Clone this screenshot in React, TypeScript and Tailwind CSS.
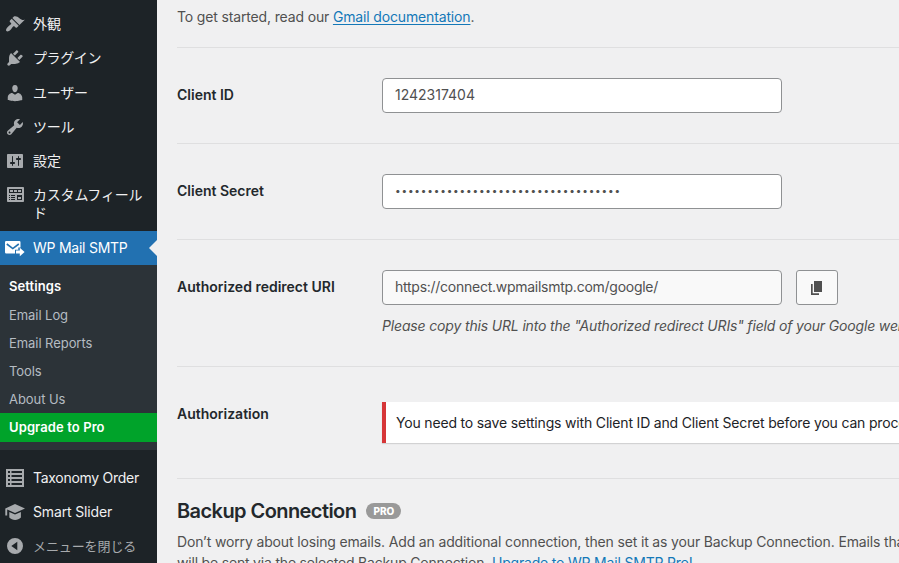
import type { ReactNode } from "react";

function Icon({ d, className = "" }: { d: string; className?: string }) {
  return (
    <svg viewBox="0 0 20 20" className={`size-5 shrink-0 ${className}`} fill="currentColor" fillRule="evenodd">
      <path d={d} />
    </svg>
  );
}

const brush =
  "M14.48 11.06L7.41 3.99l1.5-1.5c.5-.56 2.3-.47 3.51.32 1.21.8 1.43 1.28 2.91 2.1 1.18.64 2.45 1.26 4.45.85zm-.71.71L6.7 4.7 4.93 6.47c-.39.39-.39 1.02 0 1.41l1.06 1.06c.39.39.39 1.03 0 1.42-.6.6-1.43 1.11-2.21 1.69-.35.26-.7.53-1.01.84C1.43 14.23.4 16.08 1.4 17.07c.99 1 2.84-.03 4.18-1.36.31-.31.58-.66.85-1.02.57-.78 1.08-1.61 1.69-2.21.39-.39 1.02-.39 1.41 0l1.06 1.06c.39.39 1.02.39 1.41 0z";
const plug =
  "M13.11 4.36L9.87 7.6 8 5.73l3.24-3.24c.35-.34 1.05-.2 1.56.32.52.51.66 1.21.31 1.55zm-8 1.77l.91-1.12 9.01 9.01-1.19.84c-.71.71-2.63 1.16-3.82 1.16H6.14L4.9 17.26c-.59.59-1.54.59-2.12 0-.59-.58-.59-1.53 0-2.12l1.24-1.24v-3.88c0-1.13.4-3.19 1.09-3.89zm7.26 3.97l3.24-3.24c.34-.35 1.04-.21 1.55.31.52.51.66 1.21.31 1.55l-3.24 3.25z";
const user =
  "M10 9.25c-2.27 0-2.73-3.44-2.73-3.44C7 4.02 7.82 2 9.97 2c2.16 0 2.98 2.02 2.71 3.81 0 0-.41 3.44-2.68 3.44zm0 2.57L12.72 10c2.39 0 4.52 2.33 4.52 4.53v2.49s-3.65 1.13-7.24 1.13c-3.65 0-7.24-1.13-7.24-1.13v-2.49c0-2.25 1.94-4.48 4.47-4.48z";
const wrench =
  "M16.68 9.77c-1.34 1.34-3.3 1.67-4.95.99l-5.41 6.52c-.99.99-2.59.99-3.58 0s-.99-2.59 0-3.57l6.52-5.42c-.68-1.65-.35-3.61.99-4.95 1.28-1.28 3.12-1.62 4.72-1.06l-2.89 2.89 2.82 2.82 2.86-2.87c.53 1.58.18 3.39-1.08 4.65zM3.81 16.21c.4.39 1.04.39 1.43 0 .4-.4.4-1.04 0-1.43-.39-.4-1.03-.4-1.43 0-.39.39-.39 1.03 0 1.43z";
const sliders =
  "M18 16V4c0-.55-.45-1-1-1H3c-.55 0-1 .45-1 1v12c0 .55.45 1 1 1h14c.55 0 1-.45 1-1zM8 11h1c.55 0 1 .45 1 1s-.45 1-1 1H8v1.5c0 .28-.22.5-.5.5s-.5-.22-.5-.5V13H6c-.55 0-1-.45-1-1s.45-1 1-1h1V5.5c0-.28.22-.5.5-.5s.5.22.5.5V11zm5-2h-1c-.55 0-1-.45-1-1s.45-1 1-1h1V5.5c0-.28.22-.5.5-.5s.5.22.5.5V7h1c.55 0 1 .45 1 1s-.45 1-1 1h-1v5.5c0 .28-.22.5-.5.5s-.5-.22-.5-.5V9z";
const widgets =
  "M19 16V3c0-.55-.45-1-1-1H3c-.55 0-1 .45-1 1v13c0 .55.45 1 1 1h15c.55 0 1-.45 1-1zM4 4h13v4H4V4zm1 1v2h3V5H5zm4 0v2h3V5H9zm4 0v2h3V5h-3zM4 10h1v1H4zM6 10h4v1H6zM12 10h5v5h-5zM4 12h1v1H4zM6 12h4v1H6zM13 12v2h3v-2zM4 14h1v1H4zM6 14h4v1H6z";
const list =
  "M1 1h18v18H1zM3 3h2v2H3zM6.500 3H17v2H6.500zM3 7h2v2H3zM6.500 7H17v2H6.500zM3 11h2v2H3zM6.500 11H17v2H6.500zM3 15h2v2H3zM6.500 15H17v2H6.500z";
const cap =
  "M10 2L20 6.500 10 11 2.200 7.600V13.500H.3V6.500zM4.300 10L10 12.600 15.900 10V15.600C13 18.800 7.200 18.800 4.300 15.600z";
const collapse = "M10 2a8 8 0 1 0 0 16a8 8 0 1 0 0-16zM12.300 5.700v8.600L6.300 10z";

function MenuItem({ icon, children, className = "h-[34.25px] items-center" }: { icon: ReactNode; children: ReactNode; className?: string }) {
  return (
    <a className={`flex gap-2 pl-[5px] ${className}`}>
      {icon}
      <span className="whitespace-nowrap">{children}</span>
    </a>
  );
}

function Sidebar() {
  return (
    <nav className="h-[563px] w-[157px] shrink-0 overflow-hidden bg-[#1d2327] pt-[7px] text-[14px] leading-[18px] text-[#f0f0f1]">
      <div className="text-[#a7aaad] [&_span]:text-[#f0f0f1]">
        <MenuItem icon={<Icon d={brush} />}>外観</MenuItem>
        <MenuItem icon={<Icon d={plug} />}><span className="tracking-[-0.4px]">プラグイン</span></MenuItem>
        <MenuItem icon={<Icon d={user} />}><span className="tracking-[-0.2px]">ユーザー</span></MenuItem>
        <MenuItem icon={<Icon d={wrench} />}><span className="tracking-[-0.2px]">ツール</span></MenuItem>
        <MenuItem icon={<Icon d={sliders} />}>設定</MenuItem>
        <MenuItem icon={<Icon d={widgets} className="-mt-[1px]" />} className="h-[52.750px] items-start pt-2">
          <span className="tracking-[-0.2px]">カスタムフィール<br />ド</span>
        </MenuItem>
      </div>
      <a className="flex h-[34px] items-center bg-[#2271b1] pl-[5px] text-white">
        <svg viewBox="0 0 20 17" className="h-[17px] w-5 shrink-0">
          <path fill="#fff" d="M1.200 1h13.100q1.200 0 1.200 1.200v5.300H13.300v2.200H10v3.800H1.200Q0 13.500 0 12.300V2.200Q0 1 1.200 1z" />
          <path fill="none" stroke="#2271b1" strokeWidth="1.600" d="M1.800 4L7.800 8.600 13.800 4" />
          <path fill="#fff" d="M11 10.500h3.800V7.800L19.600 12l-4.800 4.300v-2.700H11z" />
        </svg>
        <span className="ml-2 flex-1 whitespace-nowrap tracking-[-0.25px]">WP Mail SMTP</span>
        <svg viewBox="0 0 8 16" className="h-4 w-2"><path fill="#f0f0f1" d="M8 0v16L0 8z" /></svg>
      </a>
      <div className="flex h-[185px] flex-col bg-[#2c3338] pt-[7px] text-[13px] text-[#b5bcc2] [&>a]:flex [&>a]:h-7 [&>a]:items-center [&>a]:pl-[9px] [&>a]:tracking-[-0.06px]">
        <a className="mb-[1px] font-semibold tracking-[0.08px]! text-white">Settings</a>
        <a>Email Log</a>
        <a>Email Reports</a>
        <a>Tools</a>
        <a>About Us</a>
        <a className="h-[29px]! bg-[#00a32a] pb-[1px] font-semibold tracking-[0.1px]! text-white">Upgrade to Pro</a>
      </div>
      <div className="pt-[11px] text-[#a7aaad] [&_span]:text-[#f0f0f1]">
        <MenuItem icon={<Icon d={list} />}><span className="tracking-[-0.28px]">Taxonomy Order</span></MenuItem>
        <MenuItem icon={<Icon d={cap} />}><span className="tracking-[-0.15px]">Smart Slider</span></MenuItem>
        <MenuItem icon={<Icon d={collapse} />} className="h-[33px] items-center"><span className="text-[13px] tracking-[-0.1px] text-[#a7aaad]!">メニューを閉じる</span></MenuItem>
      </div>
    </nav>
  );
}

function Row({ label, height, children }: { label: string; height: string; children: ReactNode }) {
  return (
    <section className={`flex border-b border-[#dfdfe0] ${height}`}>
      <h3 className="w-[205px] shrink-0 pt-[37px] text-[14px] leading-5 font-semibold text-[#23282c]">{label}</h3>
      <div className="min-w-0 flex-1">{children}</div>
    </section>
  );
}

const field = "flex h-[35px] w-[400px] items-center rounded-[4px] border border-[#8f9193] px-3 pb-[2px] text-[14px]";

export default function App() {
  return (
    <div className="flex h-[563px] w-[899px] overflow-hidden bg-[#f0f0f1] font-[Inter,'Noto_Sans_CJK_JP',sans-serif] text-[#50575e]">
      <Sidebar />
      <main className="w-[742px] shrink-0 overflow-hidden pl-5 text-[14px] whitespace-nowrap text-[#505050]">
        <p className="h-12 border-b border-[#dfdfe0] pt-[7px] leading-5 tracking-[-0.15px]">
          To get started, read our <a className="text-[#1478b8] underline underline-offset-2">Gmail documentation</a>.
        </p>
        <Row label="Client ID" height="h-24">
          <div className={`mt-[30px] bg-white ${field}`}>1242317404</div>
        </Row>
        <Row label="Client Secret" height="h-24">
          <div className={`mt-[30px] bg-white ${field}`}><span className="text-[10px] tracking-[0.83px]">•••••••••••••••••••••••••••••••••••</span></div>
        </Row>
        <Row label="Authorized redirect URI" height="h-[127px]">
          <div className="mt-[30px] flex gap-[14px]">
            <div className={`bg-[#f9f9f9] tracking-[-0.26px] ${field}`}>https://connect.wpmailsmtp.com/google/</div>
            <button className="flex h-[35px] w-[42px] items-center justify-center rounded-[3px] border border-[#8f9193] bg-[#f9f9f9]">
              <svg viewBox="0 0 12 14" className="h-[14px] w-3" fill="#505050">
                <path d="M3 0h8v11H3zM0 3h1.700v9.300H8V14H0z" />
              </svg>
            </button>
          </div>
          <p className="mt-[11px] leading-5 tracking-[-0.16px] italic">Please copy this URL into the "Authorized redirect URIs" field of your Google web</p>
        </Row>
        <Row label="Authorization" height="h-28">
          <div className="mt-[35px] flex h-[41px] items-center border-l-4 border-[#d63638] bg-white pl-[10px] tracking-[-0.175px] text-[#1d2327] shadow-[0_1px_1px_rgba(0,0,0,0.12)]">
            You need to save settings with Client ID and Client Secret before you can proceed
          </div>
        </Row>
        <div className="flex h-[53px] items-center pt-[11px]">
          <h2 className="text-[20px] leading-6 font-semibold tracking-[-0.57px] text-[#23282c]">Backup Connection</h2>
          <span className="ml-[10px] flex h-4 w-[35px] items-center justify-center rounded-full bg-[#999] text-[10px] font-extrabold text-white">PRO</span>
        </div>
        <p className="-mt-[1px] leading-[21px] tracking-[-0.15px]">
          Don’t worry about losing emails. Add an additional connection, then set it as your Backup Connection. Emails that
          <br />
          <span className="tracking-[-0.19px]">
            will be sent via the selected Backup Connection. <a className="text-[#1478b8] underline underline-offset-2">Upgrade to WP Mail SMTP Pro!</a>
          </span>
        </p>
      </main>
    </div>
  );
}
